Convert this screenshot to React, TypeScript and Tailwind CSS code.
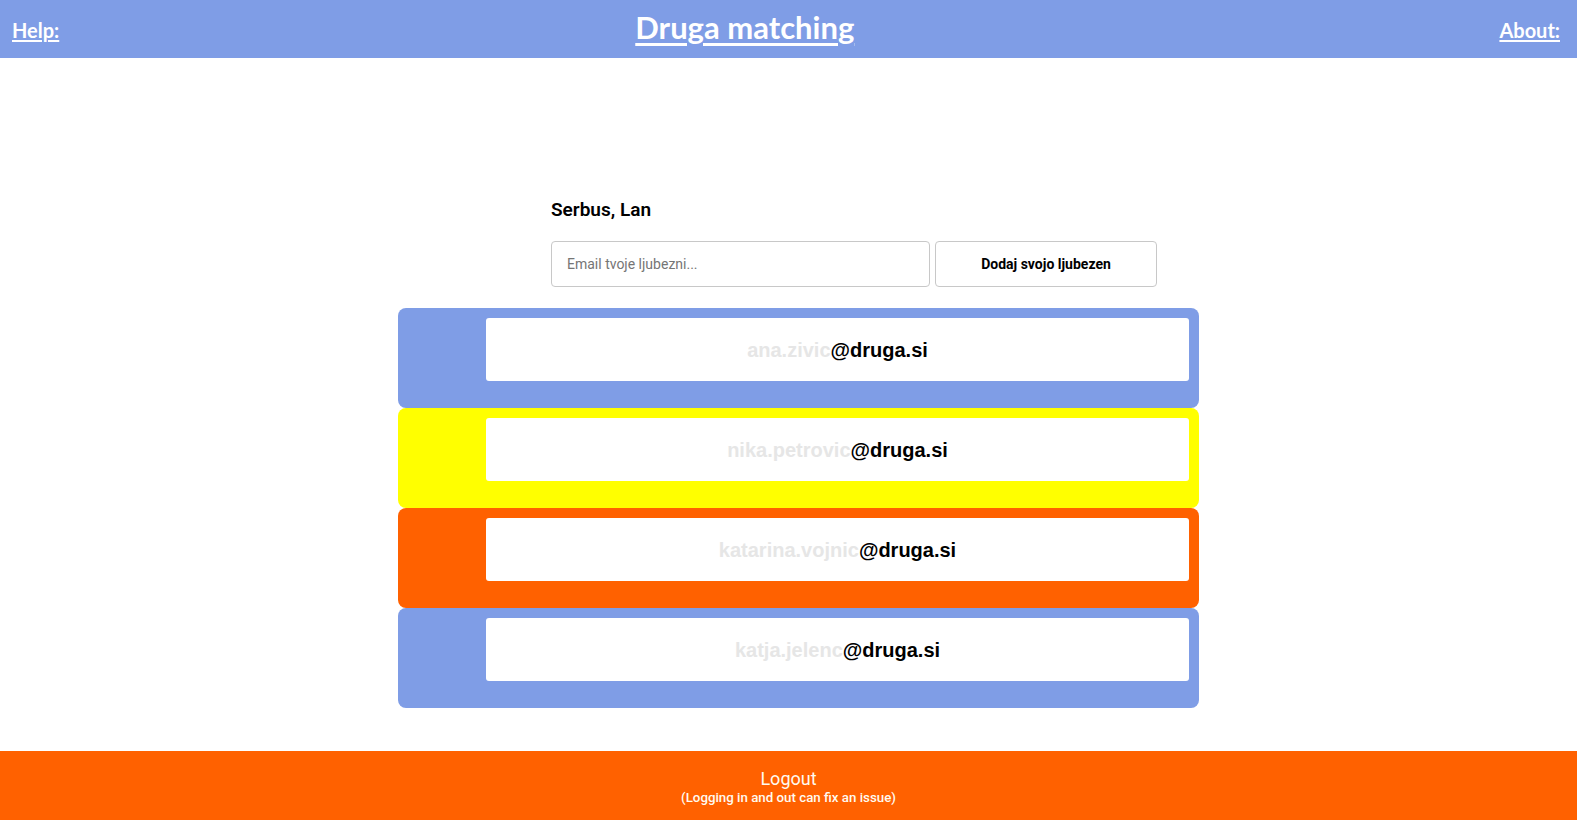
const matches = [
  { prefix: "ana.zivic", color: "bg-[#7f9de6]" },
  { prefix: "nika.petrovic", color: "bg-[#ffff00]" },
  { prefix: "katarina.vojnic", color: "bg-[#ff6100]" },
  { prefix: "katja.jelenc", color: "bg-[#7f9de6]" },
];

export default function App() {
  return (
    <div className="min-h-screen flex flex-col bg-white">
      {/* Top bar */}
      <header className="h-[58px] bg-[#7f9de6] flex items-start px-3 text-white font-['Lato',sans-serif] font-bold">
        <a href="#" className="mt-[18px] text-[20px] leading-6 underline underline-offset-2">
          Help:
        </a>
        <a href="#" className="ml-[576px] mt-[9px] text-[31px] leading-9 underline underline-offset-4">
          Druga matching
        </a>
        <a href="#" className="ml-auto mr-[5px] mt-[18px] text-[20px] leading-6 underline underline-offset-2">
          About:
        </a>
      </header>

      <main className="pt-[138px] font-['Roboto',sans-serif]">
        <div className="w-[801px] ml-[398px]">
          <div className="ml-[153px] w-[606px]">
            <h2 className="text-[19px] leading-[27px] font-semibold text-black">Serbus, Lan</h2>
            <div className="mt-[18px] flex gap-[5px]">
              <input
                type="text"
                placeholder="Email tvoje ljubezni..."
                className="w-[379px] h-[46px] rounded-[4px] border border-[#c8c8c8] px-[15px] text-[14px] text-black placeholder:text-[#757575] outline-none"
              />
              <button className="w-[222px] h-[46px] rounded-[4px] border border-[#c8c8c8] bg-white text-[14px] font-bold text-black">
                Dodaj svojo ljubezen
              </button>
            </div>
          </div>

          <div className="mt-[21px] flex flex-col">
            {matches.map((m, i) => (
              <div key={i} className={`h-[100px] rounded-[8px] ${m.color} pt-[10px] pl-[88px] pr-[10px]`}>
                <div className="h-[63px] rounded-[3px] bg-white flex items-center justify-center font-['Liberation_Sans',Arial,sans-serif] font-bold text-[20px]">
                  <span className="text-[#e6e6e6]">{m.prefix}</span>
                  <span className="text-black">@druga.si</span>
                </div>
              </div>
            ))}
          </div>
        </div>
      </main>

      {/* Logout footer */}
      <footer className="mt-[43px] h-[70px] bg-[#ff6100] flex flex-col items-center pt-[17px] text-[#fffaf0] font-['Roboto',sans-serif]">
        <button className="text-[18px] leading-[22px]">Logout</button>
        <span className="text-[13.3px] leading-[16px] font-medium">(Logging in and out can fix an issue)</span>
      </footer>
    </div>
  );
}
